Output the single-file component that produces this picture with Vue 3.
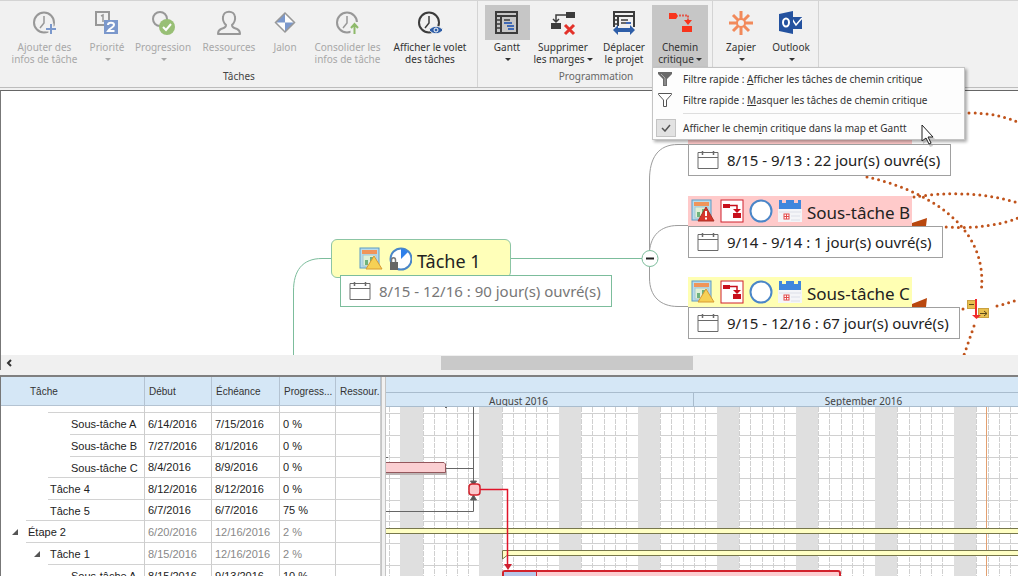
<script setup>
const GRAY = '#8f8f8f'
const DARK = '#3c3c3c'
const clock = (c) =>
  `<circle cx="11" cy="11.500" r="10" fill="none" stroke="${c}" stroke-width="2"/><path d="M11 5v7l-4 5" fill="none" stroke="${c}" stroke-width="1.500"/>`

const icons = {
  addInfo: clock(GRAY) + '<path d="M18 12.500v11M12.500 18h11" stroke="#f1f1f1" stroke-width="5"/><path d="M18 13v10M13 18h10" stroke="#6f8fc8" stroke-width="2"/>',
  priority: `<path d="M9 14H1V1h13v8" fill="none" stroke="${GRAY}" stroke-width="2"/><path d="M6 5l2-1v7" fill="none" stroke="${GRAY}" stroke-width="1.500"/><rect x="9" y="9" width="14" height="14" fill="#6f8fc8"/><path d="M13 14c0-3 6-3 6 0 0 2-4 3-6 6h6.500" fill="none" stroke="#fff" stroke-width="2"/>`,
  progress: `<circle cx="9" cy="8" r="7" fill="none" stroke="${GRAY}" stroke-width="2"/><circle cx="16" cy="16" r="8" fill="#8fba68"/><path d="M12 16l3 3 5-6" fill="none" stroke="#fff" stroke-width="2"/>`,
  people: `<path d="M9 14c-3-3-3.500-5-3-8 .5-7 11.500-7 12 0 .5 3 0 5-3 8 0 3 2 3 5 4 2.500 1 3 2 3 5H1c0-3 .5-4 3-5 3-1 5-1 5-4z" fill="none" stroke="${GRAY}" stroke-width="2" stroke-linejoin="round"/>`,
  milestone: `<path d="M12 2l9.500 9.500L12 21l-9.500-9.500z" fill="#fff"/><path d="M12 2v9.500H2.500zM12 21v-9.500h9.500z" fill="#6f8fc8"/><path d="M12 2l9.500 9.500L12 21l-9.500-9.500z" fill="none" stroke="${GRAY}" stroke-width="1.500"/>`,
  rollup: clock(GRAY) + '<path d="M18.500 11v12" stroke="#f1f1f1" stroke-width="8"/><path d="M18.500 23v-9M15 17l3.500-4 3.500 4" fill="none" stroke="#84b55c" stroke-width="2"/>',
  pane: clock(DARK) + '<path d="M11 19c4-5 10-5 14 0-4 5-10 5-14 0z" fill="#2e5ea8" stroke="#f1f1f1"/><circle cx="18" cy="19" r="2" fill="none" stroke="#fff"/>',
  gantt: `<path d="M1 1h21v21H1zM1 5h21M6 5v17" fill="none" stroke="${DARK}" stroke-width="2"/><path d="M2 9h3M2 13h3M2 17h3M9 9h6" stroke="${DARK}" stroke-width="1.500"/><path d="M9 12h8M12 15h7M13 18h6" stroke="#3f69b5" stroke-width="2"/>`,
  slack: `<rect x="15" y="1" width="9" height="6" fill="${DARK}"/><rect x="0" y="12" width="10" height="6" fill="${DARK}"/><path d="M15 4H5v6M2 8l3 3 3-3" fill="none" stroke="${DARK}" stroke-width="1.500"/><path d="M14 14l9 9M23 14l-9 9" stroke="#e3322a" stroke-width="3"/>`,
  move: `<path d="M2 16V1h20v15M2 5h20M6 5v10" fill="none" stroke="${DARK}" stroke-width="2"/><path d="M2 9h3M2 13h3M9 9h7M9 12h6" stroke="${DARK}" stroke-width="1.500"/><path d="M14 12h5" stroke="#3f69b5" stroke-width="2"/><path d="M1 19l5-5v3h12v-3l5 5-5 5v-3H6v3z" fill="#2e5ea8"/>`,
  critical: '<path d="M1 2h7l2 3-2 3H1z" fill="#f8341c"/><path d="M11 4.500h9v5" fill="none" stroke="#e2574a" stroke-width="2" stroke-dasharray="2 1"/><path d="M16 9h8l-4 5z" fill="#f8341c"/><rect x="14" y="15" width="10" height="6" fill="#f8341c"/>',
  zapier: '<path d="M12 0v24M0 12h24M4 4l16 16M20 4L4 20" stroke="#f28a5b" stroke-width="3"/><circle cx="12" cy="12" r="4" fill="#f1f1f1" stroke="#f28a5b" stroke-width="2"/>',
  outlook: '<rect x="12" y="6" width="11" height="12" fill="#24529f"/><path d="M13 8l4 6 6-7" fill="none" stroke="#fff" stroke-width="1.500"/><path d="M0 3l14-3v23L0 20z" fill="#24529f"/><ellipse cx="7" cy="11.500" rx="3" ry="4" fill="none" stroke="#fff" stroke-width="2"/>',
  chart: '<rect x="1" y="1" width="19" height="20" fill="#b9dcec" stroke="#5d9bc4"/><rect x="3" y="3" width="15" height="4" fill="#f0955a"/><rect x="4" y="8" width="13" height="11" fill="#dff0d8" stroke="#a6c7d0"/><path d="M6 18v-5h3v5zM11 17v-7h3v7z" fill="#6fb27c"/>',
  warnYellow: '<path d="M15 9l8 13H7z" fill="#f6d155" stroke="#d99a35" stroke-linejoin="round"/>',
  warnRed: '<path d="M15 8l8 14H7z" fill="#d8352c" stroke="#a93226" stroke-linejoin="round"/><path d="M15 12v5M15 18.500v2" stroke="#fff" stroke-width="2"/>',
  path: '<rect x="1" y="1" width="22" height="22" fill="#fff" stroke="#d0202c"/><rect x="3" y="5" width="7" height="4" fill="#c8101c"/><path d="M10 6.500h7v6" fill="none" stroke="#c8101c" stroke-width="1.500"/><path d="M13 10h8l-4 4z" fill="#c8101c"/><rect x="13" y="14" width="8" height="5" fill="#c8101c"/>',
  ring: '<circle cx="12" cy="12" r="10.500" fill="#fff" stroke="#4a86c8" stroke-width="2"/>',
  calendar: '<rect x="0" y="10" width="24" height="13" fill="#f4f5f8"/><path d="M1 1h3v3h4V1h8v3h4V1h3v9H1z" fill="#3f87dd"/><rect x="6" y="15" width="5" height="5" fill="#fff" stroke="#e24a4a"/><path d="M8.500 15v5M6 17.500h5" stroke="#e24a4a"/><path d="M1 13h22M13 17h9M13 21h9" stroke="#dcdfe8"/>',
  pieLock: '<circle cx="13" cy="12" r="10.500" fill="#fff" stroke="#4a86c8" stroke-width="2"/><path d="M13 12V2l3 0 4 3z" fill="#2f80ea"/><path d="M3.500 16v-3c0-3 4-3 4 0v3" fill="none" stroke="#777" stroke-width="1.500"/><rect x="2" y="15" width="8" height="8" fill="#666"/>',
  sheet: '<path d="M1 2.500h20v16H1zM1 7.500h20" fill="none" stroke="#6a6a6a"/><path d="M5.500 1v4M16.500 1v4" stroke="#6a6a6a" stroke-width="1.500"/>',
}

const groups = [
  {
    name: 'Tâches', id: 'tasks', dark: true,
    buttons: [
      { icon: 'addInfo', lines: ['Ajouter des', 'infos de tâche'], size: 'l', off: true },
      { icon: 'priority', lines: ['Priorité'], size: 's', off: true, drop: true },
      { icon: 'progress', lines: ['Progression'], size: 'm', off: true, drop: true },
      { icon: 'people', lines: ['Ressources'], size: 'm', off: true, drop: true },
      { icon: 'milestone', lines: ['Jalon'], size: 's', off: true },
      { icon: 'rollup', lines: ['Consolider les', 'infos de tâche'], size: 'l', off: true },
      { icon: 'pane', lines: ['Afficher le volet', 'des tâches'], size: 'xl' },
    ],
  },
  {
    name: 'Programmation', id: 'plan',
    buttons: [
      { icon: 'gantt', lines: ['Gantt'], size: 's', drop: true, lit: true },
      { icon: 'slack', lines: ['Supprimer', 'les marges'], size: 'm', drop: true },
      { icon: 'move', lines: ['Déplacer', 'le projet'], size: 'n' },
      { icon: 'critical', lines: ['Chemin', 'critique'], size: 'n', drop: true, open: true },
    ],
  },
  {
    name: '', id: 'apps',
    buttons: [
      { icon: 'zapier', lines: ['Zapier'], size: 'a', drop: true },
      { icon: 'outlook', lines: ['Outlook'], size: 'a', drop: true },
    ],
  },
]

const topics = [
  { id: 'a', title: '', tone: 'pink', icons: [], when: '8/15 - 9/13 : 22 jour(s) ouvré(s)' },
  { id: 'b', title: 'Sous-tâche B', tone: 'pink', icons: ['chart+warnRed', 'path', 'ring', 'calendar'], when: '9/14 - 9/14 : 1 jour(s) ouvré(s)' },
  { id: 'c', title: 'Sous-tâche C', tone: 'yellow', icons: ['chart+warnYellow', 'path', 'ring', 'calendar'], when: '9/15 - 12/16 : 67 jour(s) ouvré(s)' },
]
const draw = (key) => key.split('+').map((k) => icons[k]).join('')

const rows = [
  { name: 'Sous-tâche A', start: '6/14/2016', end: '7/15/2016', pct: '0 %', level: 3, rule: 3 },
  { name: 'Sous-tâche B', start: '7/27/2016', end: '8/1/2016', pct: '0 %', level: 3, rule: 3 },
  { name: 'Sous-tâche C', start: '8/4/2016', end: '8/9/2016', pct: '0 %', level: 3, rule: 2 },
  { name: 'Tâche 4', start: '8/12/2016', end: '8/12/2016', pct: '0 %', level: 2, rule: 2 },
  { name: 'Tâche 5', start: '6/7/2016', end: '6/7/2016', pct: '75 %', level: 2, rule: 1 },
  { name: 'Étape 2', start: '6/20/2016', end: '12/16/2016', pct: '2 %', level: 1, rule: 1, sum: true },
  { name: 'Tâche 1', start: '8/15/2016', end: '12/16/2016', pct: '2 %', level: 2, rule: 2, sum: true },
  { name: 'Sous-tâche A', start: '8/15/2016', end: '9/13/2016', pct: '10 %', level: 3, rule: 3 },
]

// Day 0 is August 1st, a Monday.
const dayX = (d) => Math.round(-42 + (d * 350) / 31)
const days = Array.from({ length: 200 }, (_, i) => i + 3)
const weekends = Array.from({ length: 28 }, (_, i) => 5 + i * 7)
const ruleYs = [6, 28, 50, 71, 93, 114, 136, 158]
</script>

<template>
  <div class="app">
    <header class="ribbon">
      <section v-for="g in groups" :key="g.id" class="group" :class="g.id">
        <div class="tools">
          <div v-for="b in g.buttons" :key="b.icon" class="slot" :class="'w-' + b.size">
            <button type="button" class="tool" :class="{ off: b.off, open: b.open }" :disabled="b.off">
              <span class="pic" :class="{ lit: b.lit }">
                <svg width="24" height="24" viewBox="0 0 24 24" overflow="visible" v-html="icons[b.icon]" />
              </span>
              <span class="line">{{ b.lines[0] }}</span>
              <span class="line">{{ b.lines[1] }}<i v-if="b.drop" class="caret" /></span>
            </button>
            <div v-if="b.open" class="menu">
              <button type="button" class="item">
                <svg class="funnel" width="16" height="16" viewBox="0 0 16 16">
                  <path d="M1 1h14v2l-5 5v7H6V8L1 3z" fill="#6a6a6a" />
                  <path d="M4 3l4 4v7" fill="none" stroke="#aaa" />
                </svg>
                <span>Filtre rapide : <u>A</u>fficher les tâches de chemin critique</span>
              </button>
              <button type="button" class="item">
                <svg class="funnel" width="16" height="16" viewBox="0 0 16 16">
                  <path d="M1.500 1.500h13v1L9.500 8v6.500h-3V8l-5-5.500z" fill="#fff" stroke="#555" />
                </svg>
                <span>Filtre rapide : <u>M</u>asquer les tâches de chemin critique</span>
              </button>
              <hr />
              <label class="item check">
                <input type="checkbox" checked />
                <svg class="tick" width="10" height="8" viewBox="0 0 10 8"><path d="M1 4l3 3 5-6" fill="none" stroke="#555" stroke-width="1.500" /></svg>
                <span>Afficher le chem<u>i</u>n critique dans la map et Gantt</span>
              </label>
            </div>
          </div>
        </div>
        <h2 :class="{ strong: g.dark }">{{ g.name }}</h2>
      </section>
    </header>

    <main class="map">
      <svg class="links" width="100%" height="100%">
        <g transform="translate(-1 -91)" fill="none">
          <g stroke="#7cbd9c">
            <path d="M293.500 356V291C293.500 271 302 258.500 322 258.500H331M511 258.500H642" />
          </g>
          <g stroke="#9c9c9c">
            <path d="M649.500 251V180C649.500 158 658 144.500 678 144.500H689M649.500 251C651 236 660 225.500 678 225.500H689M649.500 267V278C649.500 296 660 306.500 678 306.500H689" />
          </g>
          <circle cx="650" cy="258.500" r="8" fill="#fff" stroke="#7cbd9c" />
          <path d="M646 258.500h8" stroke="#222" stroke-width="2" />
          <g stroke="#c0531b" stroke-width="3" stroke-linecap="round" stroke-dasharray="0 6">
            <path d="M969 113C990 113 1005 116 1024 125" />
            <path d="M867 177C925 190 990 225 981 293" />
            <path d="M974 326L964 355" />
            <path d="M914 197C945 192 985 192 1018 203C1036 208 1036 213 1018 218C1000 225 975 229 946 227" />
            <path d="M963 309h1M997 306C1008 303 1016 301 1026 296" />
          </g>
          <path d="M912 223l15-5-1 8h-14zM912 304l15-6-1 9h-14z" fill="#b9480f" />
          <rect x="967.500" y="300.500" width="8" height="8" fill="#e8c04e" stroke="#c9a040" />
          <rect x="978.500" y="308.500" width="10" height="9" fill="#e8c04e" stroke="#c9a040" />
          <path d="M969 304.500h5M980 313.500h7M984 311l3 2.500-3 2.500" stroke="#5c4a1c" />
          <path d="M976 299v17" stroke="#f02c2c" stroke-width="2" />
          <path d="M972 315h9l-4.500 4z" fill="#f02c2c" />
        </g>
      </svg>

      <article class="topic main">
        <h3>
          <svg width="24" height="24" viewBox="0 0 24 24" v-html="draw('chart+warnYellow')" />
          <svg width="24" height="24" viewBox="0 0 24 24" v-html="icons.pieLock" />
          <span>Tâche 1</span>
        </h3>
        <p>
          <svg width="22" height="20" viewBox="0 0 22 20" v-html="icons.sheet" />
          <span>8/15 - 12/16 : 90 jour(s) ouvré(s)</span>
        </p>
      </article>
      <article v-for="t in topics" :key="t.id" class="topic" :class="['sub-' + t.id, t.tone]">
        <h3>
          <svg v-for="i in t.icons" :key="i" width="24" height="24" viewBox="0 0 24 24" v-html="draw(i)" />
          <span>{{ t.title }}</span>
        </h3>
        <p>
          <svg width="22" height="20" viewBox="0 0 22 20" v-html="icons.sheet" />
          <span>{{ t.when }}</span>
        </p>
      </article>
    </main>

    <div class="scroll">
      <button type="button" aria-label="Défiler à gauche">
        <svg width="6" height="8" viewBox="0 0 6 8"><path d="M5 1L2 4l3 3" fill="none" stroke="#333" stroke-width="2" /></svg>
      </button>
      <div class="track"><div class="thumb" /></div>
    </div>

    <section class="plan-pane">
      <div class="grid">
        <table>
          <colgroup><col class="c1" /><col class="c2" /><col class="c3" /><col class="c4" /><col class="c5" /></colgroup>
          <thead>
            <tr><th>Tâche</th><th>Début</th><th>Échéance</th><th>Progress...</th><th>Ressour.</th></tr>
          </thead>
          <tbody>
            <tr class="cut rule-2"><td /><td /><td /><td /><td /></tr>
            <tr v-for="(r, n) in rows" :key="n" :class="['rule-' + r.rule, 'lv-' + r.level, { sum: r.sum }]">
              <td><svg v-if="r.sum" class="twist" width="6" height="6" viewBox="0 0 6 6"><path d="M6 0v6H0z" fill="#555" /></svg>{{ r.name }}</td>
              <td>{{ r.start }}</td>
              <td>{{ r.end }}</td>
              <td>{{ r.pct }}</td>
              <td />
            </tr>
          </tbody>
        </table>
      </div>
      <div class="split" />
      <div class="chart">
        <div class="years" />
        <div class="months"><span class="aug">August 2016</span><span class="sep">September 2016</span></div>
        <svg class="bars" width="100%" height="100%">
          <g stroke="#d0d0d0" shape-rendering="crispEdges">
            <path v-for="d in days" :key="d" :d="`M${dayX(d)} 0V900`" stroke-dasharray="5 1" />
            <path v-for="y in ruleYs" :key="y" :d="`M0 ${y}.500H2400`" />
          </g>
          <rect v-for="w in weekends" :key="w" :x="dayX(w)" y="0" :width="dayX(w + 2) - dayX(w)" height="900" fill="#dfdfdf" />
          <path d="M600.500 0V900" stroke="#e3a070" />
          <g fill="none" stroke="#666">
            <path d="M60 61.500H87M87.500 0V76M0 104.500H87.500V90M59 .5h2M0 50.500h2" />
            <path d="M84.500 74h6l-3 5zM84.500 93h6l-3-5z" fill="#555" />
          </g>
          <rect x="0" y="64" width="61" height="4" fill="#bdb5b5" />
          <path d="M-2 55.500H58L59.500 57V65.500H-2z" fill="#fbcfd2" stroke="#94575c" />
          <path d="M0 121.500H2400M0 126.500H2400" stroke="#77774c" />
          <rect x="0" y="122" width="2400" height="4" fill="#ffffc4" />
          <path d="M2410 143.500H116.500V152L121 148.500H2410z" fill="#ffffc4" stroke="#77774c" />
          <rect x="117" y="164" width="337" height="14" rx="2" fill="#fdcdd0" stroke="#d2222c" stroke-width="2" />
          <rect x="118" y="165" width="32" height="12" fill="#b7c6e8" />
          <path d="M150.500 164v14" stroke="#d2222c" />
          <path d="M94 82.500H121.500V158" fill="none" stroke="#e0142a" stroke-width="1.500" />
          <path d="M118 157h8l-4 6z" fill="#cf2030" />
          <rect x="83" y="77" width="11" height="11" rx="3" fill="#fac9cc" stroke="#d2222c" stroke-width="1.500" />
        </svg>
      </div>
    </section>

    <svg class="pointer" width="14" height="24" viewBox="0 0 14 24">
      <path d="M2 2v18l4-3 3 6 3-1-3-7h5z" fill="#999" opacity=".5" />
      <path d="M1 1v16l4-3 3 6 2-1-3-6h5z" fill="#fff" stroke="#222" />
    </svg>
  </div>
</template>

<style>
body { margin: 0; }
</style>

<style scoped>
.app {
  position: relative;
  display: flex;
  flex-direction: column;
  height: 100vh;
  overflow: hidden;
  background: #f1f1f1;
  color: #333;
  font-family: "Noto Sans", "Open Sans", sans-serif;
  font-size: 10px;
}
* { box-sizing: border-box; }
button { margin: 0; padding: 0; border: 0; background: none; font: inherit; color: inherit; }
svg { flex: none; display: block; }

.ribbon {
  flex: none;
  display: flex;
  height: 88px;
  border-top: 1px solid #d4d4d4;
  border-bottom: 1px solid #bdbdbd;
}
.group { display: flex; flex-direction: column; padding: 4px 4px 0 5px; border-right: 1px solid #d4d4d4; }
.plan { padding: 4px 4px 0 6px; }
.apps { padding: 4px 2px 0 3px; }
.tools { display: flex; }
.slot { position: relative; }
.w-s { width: 46px; }
.w-a { width: 50px; }
.w-n { width: 56px; }
.w-m { width: 66px; }
.w-l { width: 79px; }
.w-xl { width: 86px; }
.tool { display: flex; flex-direction: column; align-items: center; width: 100%; height: 62px; white-space: nowrap; }
.tool.off { color: #a8a8a8; }
.tool.off .pic { opacity: .9; }
.tool.open { background: #c6c6c6; }
.pic { display: flex; align-items: center; justify-content: center; width: 45px; height: 35px; }
.pic.lit { background: #c6c6c6; }
.line { height: 12px; line-height: 14px; }
.caret { display: inline-block; margin-left: 2px; border: 3px solid transparent; border-top-color: currentColor; border-bottom: 0; vertical-align: 2px; }
h2 { margin: 1px 0 0; font-size: 10px; font-weight: 400; line-height: 16px; text-align: center; color: #666; }
h2.strong { color: #444; }

.menu {
  position: absolute;
  z-index: 3;
  top: 62px;
  left: 0;
  width: 313px;
  padding: 0 3px 1px;
  border: 1px solid #c4c4c4;
  background: #fdfdfd;
  box-shadow: 2px 2px 3px #0005;
}
.item { position: relative; display: flex; align-items: center; gap: 10px; width: 100%; height: 21px; white-space: nowrap; }
.funnel { margin: 0 0 0 1px; width: 16px; }
.menu hr { height: 1px; margin: 3px 0 3px 27px; border: 0; background: #dedede; }
.item input { appearance: none; flex: none; width: 20px; height: 18px; margin: 0; border: 1px solid #c4c4c4; background: #e2e2e2; }
.item.check { gap: 7px; }
.tick { position: absolute; left: 5px; top: 7px; }

.map { position: relative; flex: 1 1 265px; min-height: 0; margin-top: 2px; overflow: hidden; border-top: 1px solid #666; border-left: 1px solid #777; background: #fff; }
.links { position: absolute; inset: 0; }
.topic { position: absolute; }
.topic h3 { display: flex; align-items: center; gap: 5px; width: 224px; height: 30px; margin: 0; padding: 0 0 0 3px; font-size: 17px; font-weight: 400; color: #222; white-space: nowrap; }
.topic h3 span { padding-top: 4px; line-height: 24px; }
.topic p { display: flex; align-items: center; gap: 8px; width: max-content; height: 32px; margin: 0; padding: 0 10px 0 8px; border: 1px solid #a0a0a0; background: #fff; font-size: 15px; line-height: 20px; color: #222; white-space: nowrap; }
.pink h3 { background: #ffcaca; }
.yellow h3 { background: #ffffb3; }
.main { left: 330px; top: 148px; }
.main h3 { width: 180px; height: 39px; padding-left: 27px; border: 1px solid #8cc5a4; border-radius: 6px; background: #ffffb9; font-size: 18px; }
.main p { position: relative; margin: -3px 0 0 9px; border-color: #7cbd9c; color: #777; }
.sub-a { left: 687px; top: 23px; }
.sub-b { left: 687px; top: 105px; }
.sub-c { left: 687px; top: 186px; }

.scroll { flex: none; display: flex; height: 15px; border-left: 1px solid #777; background: #f0f0f0; }
.scroll button { display: flex; align-items: center; justify-content: center; width: 16px; }
.track { flex: 1; display: flex; padding: 1px 0; }
.track::before { content: ""; flex: 424; }
.track::after { content: ""; flex: 325; }
.thumb { flex: 252; height: 14px; background: #c9c9c9; }

.plan-pane { flex: 1 1 201px; min-height: 0; display: flex; margin-top: 5px; overflow: hidden; border-top: 2px solid #808080; border-left: 1px solid #777; background: #fff; }
.grid { flex: none; width: 380px; overflow: hidden; }
table { width: 380px; border-collapse: separate; border-spacing: 0; table-layout: fixed; font-family: "Liberation Sans", Arial, sans-serif; font-size: 11px; color: #222; }
.c1 { width: 144px; }
.c2 { width: 67px; }
.c3 { width: 68px; }
.c4 { width: 56px; }
.c5 { width: 45px; }
th { height: 29px; padding: 1px 0 0 4px; border-right: 1px solid #b4c3d2; border-bottom: 1px solid #b4c3d2; background: #d5e7f6; font-size: 10px; font-weight: 400; text-align: left; color: #333; white-space: nowrap; }
th:first-child { padding-left: 29px; }
td { position: relative; height: 22px; padding: 0 0 0 3px; border-right: 1px solid #cdcdcd; border-bottom: 1px solid #d2d2d2; line-height: 12px; white-space: nowrap; }
tbody tr:nth-child(4) td, tbody tr:nth-child(6) td { height: 21px; }
.cut td { height: 7px; }
td:first-child { border-bottom: 0; background: linear-gradient(#d2d2d2, #d2d2d2) no-repeat right bottom; }
.rule-1 td:first-child { background-size: 118px 1px; }
.rule-2 td:first-child { background-size: 96px 1px; }
.rule-3 td:first-child { background-size: 74px 1px; }
.lv-1 td:first-child { padding-left: 27px; }
.lv-2 td:first-child { padding-left: 49px; }
.lv-3 td:first-child { padding-left: 70px; }
.sum td:not(:first-child) { color: #888; }
.twist { position: absolute; top: 8px; left: 11px; }
.lv-2 .twist { left: 33px; }

.split { flex: none; width: 5px; border: 1px solid #c4c4c4; border-width: 0 1px; background: #f1f1f1; }
.chart { flex: 1; display: flex; flex-direction: column; min-width: 0; overflow: hidden; }
.years { flex: none; height: 16px; border-bottom: 1px solid #a9bccd; background: #d5e7f6; }
.months { flex: none; display: flex; height: 14px; overflow: hidden; border-bottom: 1px solid #a9bccd; background: #d5e7f6; line-height: 17px; text-align: center; color: #444; }
.months span { flex: none; }
.aug { width: 350px; margin-left: -42px; border-right: 1px solid #a9bccd; }
.sep { width: 339px; }
.bars { flex: 1; min-height: 0; }

.pointer { position: absolute; z-index: 4; left: 921px; top: 124px; }
</style>
